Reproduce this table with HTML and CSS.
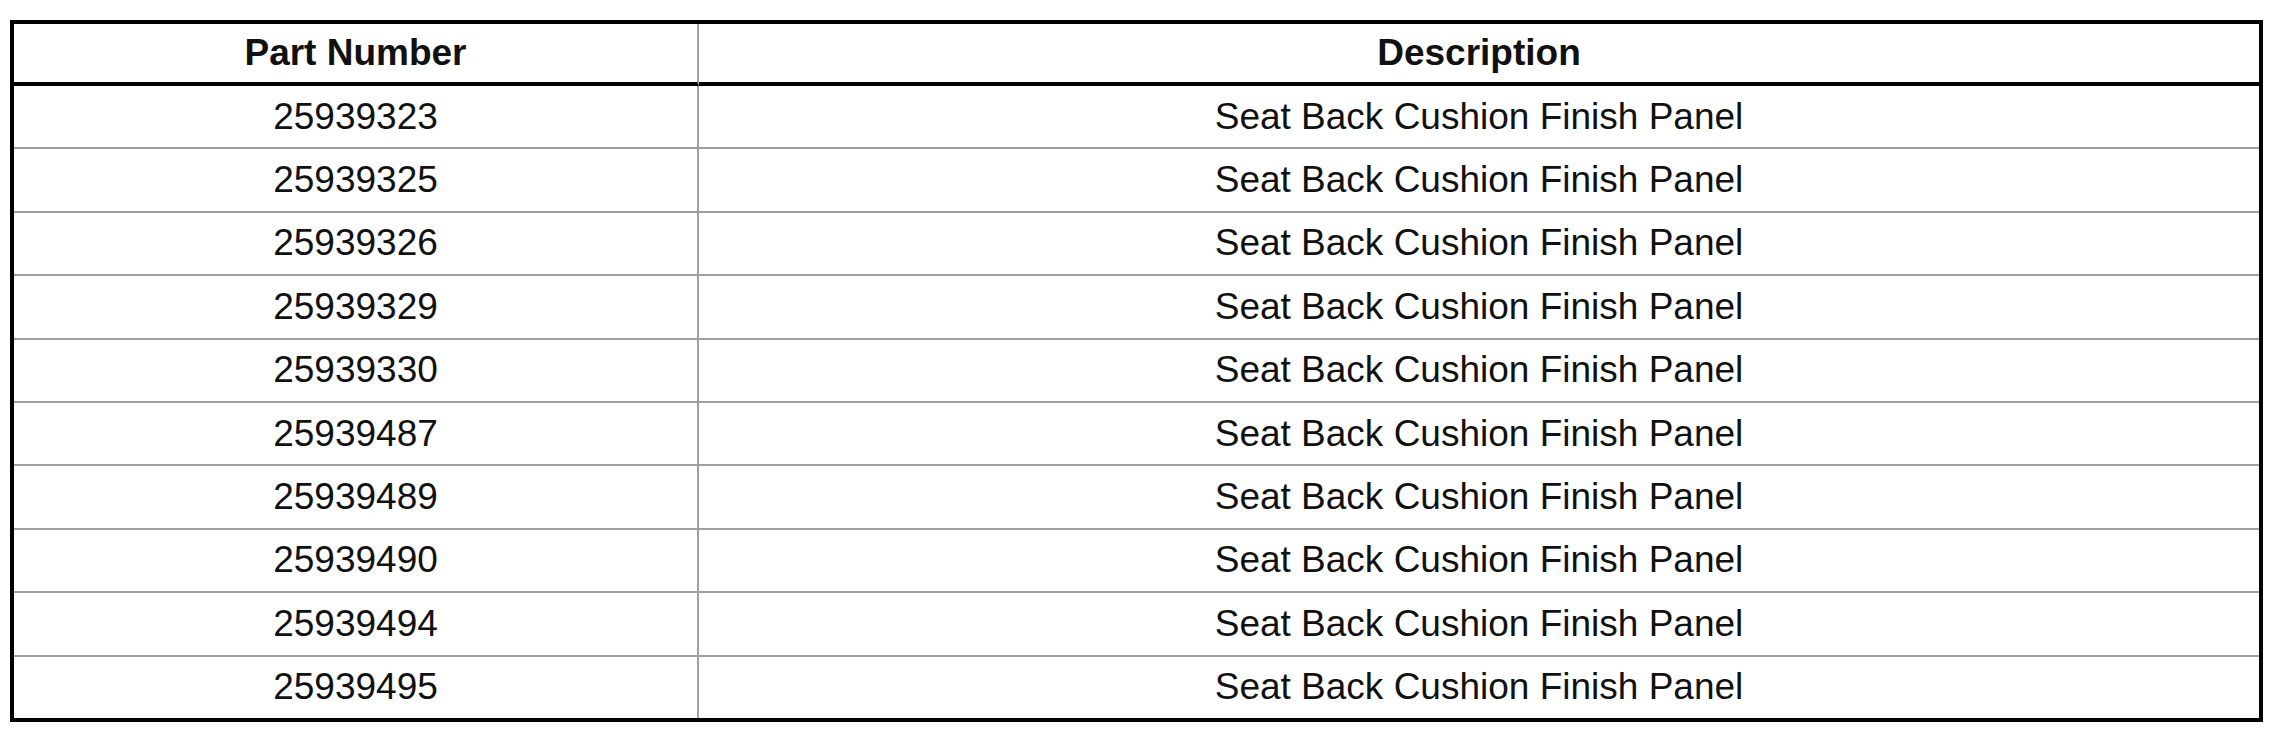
FILE: index.html
```html
<!DOCTYPE html>
<html lang="en">
<head>
<meta charset="utf-8">
<title>Parts</title>
<link rel="stylesheet" href="styles.css">
</head>
<body>
<table class="parts">
  <colgroup><col class="col-part"><col class="col-desc"></colgroup>
  <thead>
    <tr><th>Part Number</th><th>Description</th></tr>
  </thead>
  <tbody>
    <tr><td>25939323</td><td>Seat Back Cushion Finish Panel</td></tr>
    <tr><td>25939325</td><td>Seat Back Cushion Finish Panel</td></tr>
    <tr><td>25939326</td><td>Seat Back Cushion Finish Panel</td></tr>
    <tr><td>25939329</td><td>Seat Back Cushion Finish Panel</td></tr>
    <tr><td>25939330</td><td>Seat Back Cushion Finish Panel</td></tr>
    <tr><td>25939487</td><td>Seat Back Cushion Finish Panel</td></tr>
    <tr><td>25939489</td><td>Seat Back Cushion Finish Panel</td></tr>
    <tr><td>25939490</td><td>Seat Back Cushion Finish Panel</td></tr>
    <tr><td>25939494</td><td>Seat Back Cushion Finish Panel</td></tr>
    <tr><td>25939495</td><td>Seat Back Cushion Finish Panel</td></tr>
  </tbody>
</table>
</body>
</html>
```
FILE: styles.css
```css
html, body {
  margin: 0;
  padding: 0;
  background: #ffffff;
}
body {
  padding: 20px 12px 0 10px;
  font-family: "Liberation Sans", Arial, sans-serif;
  color: #111;
}
.parts {
  width: 2253px;
  table-layout: fixed;
  border-collapse: separate;
  border-spacing: 0;
  border: 4px solid #000;
}
.col-part { width: 685px; }
.parts th,
.parts td {
  padding: 0;
  text-align: center;
  font-size: 37px;
  line-height: 42px;
  vertical-align: middle;
}
.parts th {
  height: 58px;
  font-weight: bold;
  border-bottom: 4px solid #000;
}
.parts td {
  height: 61.4px;
  font-weight: normal;
  border-bottom: 2px solid #a0a0a0;
}
.parts tbody tr:last-child td {
  border-bottom: none;
}
.parts th:first-child,
.parts td:first-child {
  border-right: 2px solid #a0a0a0;
}
```
